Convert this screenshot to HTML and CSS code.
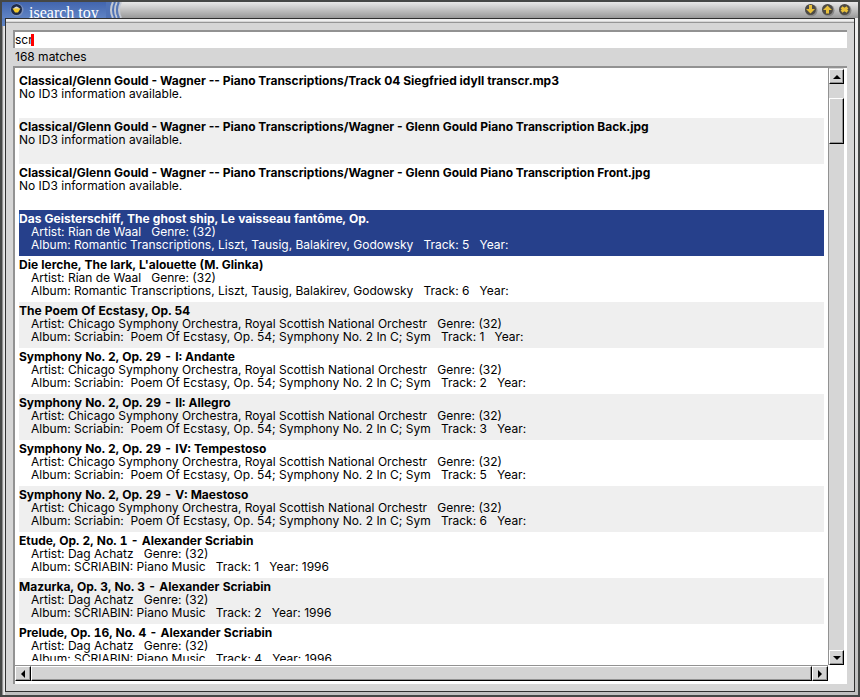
FILE: index.html
```
<!DOCTYPE html>
<html lang="en">
<head>
<meta charset="utf-8">
<title>isearch toy</title>
<link rel="stylesheet" href="styles.css">
</head>
<body>
<div class="window">
  <header class="titlebar">
    <div class="caption">
      <button class="orb" aria-label="Window menu"><svg width="14" height="14" viewBox="0 0 14 14"><circle cx="7" cy="7" r="6.500" fill="#7b90bd"/><circle cx="6.500" cy="6.500" r="5.500" fill="#1d2a4a"/><path d="M3 6Q6.500 1 10 6Z" fill="#d8d8d8"/><path d="M2.500 5.500H10.500L8 9.500H5Z" fill="#f2c92a"/></svg></button>
      <h1>isearch toy</h1>
    </div>
    <svg class="swoosh" width="20" height="16" viewBox="0 0 20 16"><path d="M0 0H13Q9 8 13 16H0Z" fill="#4f72b6"/><g fill="none" stroke="#c3c8d2" stroke-width="2"><path d="M7 0Q3 8 7 16M11 0Q7 8 11 16M15 0Q11 8 15 16"/></g><path d="M13 0Q9 8 13 16" fill="none" stroke="#5878b5" stroke-width="2"/></svg>
    <div class="controls">
      <button class="orb" aria-label="Minimize"><svg width="14" height="14" viewBox="0 0 14 14"><circle cx="7.500" cy="7.500" r="6" fill="#8a8a8a"/><circle cx="6.500" cy="6.500" r="5.500" fill="#4e4b45"/><path d="M5 2H8V6H11L6.500 10.500L2 6H5Z" fill="#e8c03a"/></svg></button>
      <button class="orb" aria-label="Maximize"><svg width="14" height="14" viewBox="0 0 14 14"><circle cx="7.500" cy="7.500" r="6" fill="#8a8a8a"/><circle cx="6.500" cy="6.500" r="5.500" fill="#4e4b45"/><path d="M5 10.500H8V7H11L6.500 2.500L2 7H5Z" fill="#e8c03a"/></svg></button>
      <button class="orb" aria-label="Close"><svg width="14" height="14" viewBox="0 0 14 14"><circle cx="7.500" cy="7.500" r="6" fill="#8a8a8a"/><circle cx="6.500" cy="6.500" r="5.500" fill="#4e4b45"/><path d="M3.500 4.500L9.500 8.500M9.500 4.500L3.500 8.500" stroke="#e8c03a" stroke-width="3"/></svg></button>
    </div>
  </header>
  <main class="client">
    <div class="search">
      <input class="query" id="query" type="text" value="scr" aria-label="Search">
      <span class="caret"></span>
    </div>
    <label class="status" for="query">168 matches</label>
    <div class="browser">
      <div class="view">
        <ul class="results">
          <li class="file"><b>Classical/Glenn Gould - Wagner -- Piano Transcriptions/Track 04 Siegfried idyll transcr.mp3</b><p>No ID3 information available.</p></li>
          <li class="file"><b>Classical/Glenn Gould - Wagner -- Piano Transcriptions/Wagner - Glenn Gould Piano Transcription Back.jpg</b><p>No ID3 information available.</p></li>
          <li class="file"><b>Classical/Glenn Gould - Wagner -- Piano Transcriptions/Wagner - Glenn Gould Piano Transcription Front.jpg</b><p>No ID3 information available.</p></li>
          <li class="selected"><b>Das Geisterschiff, The ghost ship, Le vaisseau fantôme, Op.</b><p>Artist: Rian de Waal   Genre: (32)</p><p>Album: Romantic Transcriptions, Liszt, Tausig, Balakirev, Godowsky   Track: 5   Year:</p></li>
          <li><b>Die lerche, The lark, L'alouette (M. Glinka)</b><p>Artist: Rian de Waal   Genre: (32)</p><p>Album: Romantic Transcriptions, Liszt, Tausig, Balakirev, Godowsky   Track: 6   Year:</p></li>
          <li><b>The Poem Of Ecstasy, Op. 54</b><p>Artist: Chicago Symphony Orchestra, Royal Scottish National Orchestr   Genre: (32)</p><p>Album: Scriabin:  Poem Of Ecstasy, Op. 54; Symphony No. 2 In C; Sym   Track: 1   Year:</p></li>
          <li><b>Symphony No. 2, Op. 29 - I: Andante</b><p>Artist: Chicago Symphony Orchestra, Royal Scottish National Orchestr   Genre: (32)</p><p>Album: Scriabin:  Poem Of Ecstasy, Op. 54; Symphony No. 2 In C; Sym   Track: 2   Year:</p></li>
          <li><b>Symphony No. 2, Op. 29 - II: Allegro</b><p>Artist: Chicago Symphony Orchestra, Royal Scottish National Orchestr   Genre: (32)</p><p>Album: Scriabin:  Poem Of Ecstasy, Op. 54; Symphony No. 2 In C; Sym   Track: 3   Year:</p></li>
          <li><b>Symphony No. 2, Op. 29 - IV: Tempestoso</b><p>Artist: Chicago Symphony Orchestra, Royal Scottish National Orchestr   Genre: (32)</p><p>Album: Scriabin:  Poem Of Ecstasy, Op. 54; Symphony No. 2 In C; Sym   Track: 5   Year:</p></li>
          <li><b>Symphony No. 2, Op. 29 - V: Maestoso</b><p>Artist: Chicago Symphony Orchestra, Royal Scottish National Orchestr   Genre: (32)</p><p>Album: Scriabin:  Poem Of Ecstasy, Op. 54; Symphony No. 2 In C; Sym   Track: 6   Year:</p></li>
          <li><b>Etude, Op. 2, No. 1 - Alexander Scriabin</b><p>Artist: Dag Achatz   Genre: (32)</p><p>Album: SCRIABIN: Piano Music   Track: 1   Year: 1996</p></li>
          <li><b>Mazurka, Op. 3, No. 3 - Alexander Scriabin</b><p>Artist: Dag Achatz   Genre: (32)</p><p>Album: SCRIABIN: Piano Music   Track: 2   Year: 1996</p></li>
          <li><b>Prelude, Op. 16, No. 4 - Alexander Scriabin</b><p>Artist: Dag Achatz   Genre: (32)</p><p>Album: SCRIABIN: Piano Music   Track: 4   Year: 1996</p></li>
        </ul>
      </div>
      <div class="scroll vertical">
        <button class="arrow" aria-label="Scroll up"><svg width="8" height="4" viewBox="0 0 8 4"><path d="M0 4L4 0L8 4Z"/></svg></button>
        <div class="trough"><div class="thumb"></div></div>
        <button class="arrow" aria-label="Scroll down"><svg width="8" height="4" viewBox="0 0 8 4"><path d="M0 0L4 4L8 0Z"/></svg></button>
      </div>
      <div class="scroll horizontal">
        <button class="arrow" aria-label="Scroll left"><svg width="4" height="8" viewBox="0 0 4 8"><path d="M4 0L0 4L4 8Z"/></svg></button>
        <div class="trough"><div class="thumb"></div></div>
        <button class="arrow" aria-label="Scroll right"><svg width="4" height="8" viewBox="0 0 4 8"><path d="M0 0L4 4L0 8Z"/></svg></button>
      </div>
    </div>
  </main>
</div>
</body>
</html>
```
FILE: styles.css
```
* { box-sizing: border-box; }
body, h1, ul, p { margin: 0; padding: 0; }
body {
  font: 12px/13px Inter, "Liberation Sans", sans-serif;
  color: #000;
  background: #4a4c4b;
}
button { margin: 0; padding: 0; border: 0; background: none; }
svg { display: block; }

.window {
  display: flex;
  flex-direction: column;
  height: 100vh;
  border: 2px solid #454746;
  padding: 0 3px 3px;
  background:
    linear-gradient(#4a6db2, #5f83c4) left top / 3px 24px no-repeat,
    linear-gradient(90deg, #909090 1px, #d0d0d0 1px, #f0f0f0 3px, transparent 3px),
    linear-gradient(#f0f0f0, #c0c0c0);
  background-color: #d6d6d6;
}
.titlebar {
  flex: none;
  display: flex;
  height: 16px;
  margin: 0 -3px;
  overflow: hidden;
  background: linear-gradient(#e8e8e8, #999);
}
.caption {
  display: flex;
  gap: 5px;
  padding: 0 7px 0 8px;
  background: linear-gradient(#4265ae, #5f83c4);
}
.caption h1 {
  color: #fff;
  font: 16px/22px "Liberation Serif", serif;
}
.orb { width: 14px; height: 14px; margin-top: 1px; }
.controls { display: flex; gap: 3px; margin: 0 6px 0 auto; }

.client {
  flex: 1;
  min-height: 0;
  display: flex;
  flex-direction: column;
  border: 1px solid #303030;
  padding: 11px 7px 7px;
  background: linear-gradient(#efefef 2px, #d6d6d6 2px, #d6d6d6 3px, #969696 3px, #969696 4px, #d6d6d6 4px);
}
.search {
  position: relative;
  flex: none;
  height: 18px;
  border: solid #929292;
  border-width: 2px 0 0 2px;
}
.query {
  display: block;
  width: 100%;
  height: 16px;
  border: 0;
  padding: 0 0 2px;
  outline: 0;
  background: #fff;
  font: inherit;
}
.caret { position: absolute; left: 16px; top: 2px; width: 3px; height: 12px; background: #f00; }
.status { flex: none; height: 18px; line-height: 18px; padding-left: 2px; }

.browser {
  flex: 1;
  min-height: 0;
  display: grid;
  grid-template: minmax(0, 1fr) 16px / minmax(0, 1fr) 16px;
  border: solid #929292;
  border-width: 2px 0 0 2px;
  padding: 0 3px 3px 0;
  background: #fff;
}
.view { padding: 4px; overflow: hidden; }
.results { height: 100%; overflow: hidden; list-style: none; }
.results li { height: 46px; padding: 2px 0 5px; white-space: pre; }
.results li:nth-child(even) { background: #efefef; }
.results li.selected { background: #26408b; color: #fff; }
.results b { display: block; font-variant-numeric: tabular-nums; }
.results p { padding-left: 12px; }
.results .file b { font-variant-numeric: normal; }
.results .file p { padding-left: 0; }

.scroll { display: flex; background: #d6d6d6; }
.vertical { flex-direction: column; border-left: 1px solid #929292; padding-top: 1px; }
.horizontal { border-top: 1px solid #929292; }
.arrow, .thumb {
  border: 1px solid;
  border-color: #fff #000 #000 #fff;
  background: #d3d3d3;
  box-shadow: inset -1px -1px #929292;
}
.arrow { flex: none; display: grid; place-items: center; width: 15px; height: 15px; }
.horizontal .arrow { width: 16px; }
.trough { flex: 1; }
.vertical .trough { padding-top: 14px; }
.vertical .thumb { height: 46px; }
.horizontal .thumb { height: 100%; }
```
